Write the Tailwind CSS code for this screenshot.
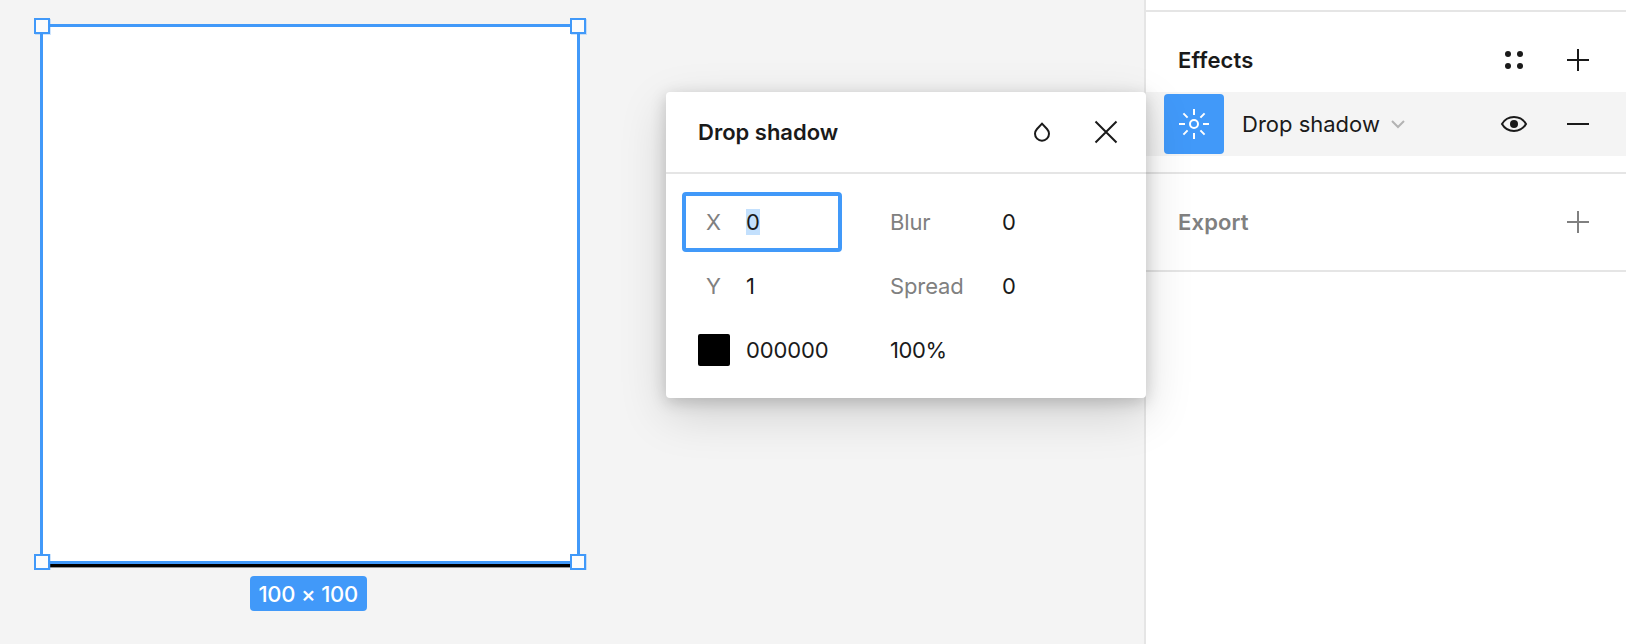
<!DOCTYPE html>
<html lang="en">
<head>
<meta charset="utf-8">
<title>Effects</title>
<script src="https://cdn.jsdelivr.net/npm/@tailwindcss/browser@4"></script>
</head>
<body class="relative flex h-[644px] w-[1626px] overflow-hidden bg-white font-['Inter',sans-serif] text-[22px] leading-8 text-[#1a1a1a]">

  <!-- Canvas -->
  <main class="relative flex-1 bg-[#f4f4f4]">
    <div class="absolute left-10 top-6 h-[540px] w-[540px] border-[3px] border-[#4199f9] bg-white shadow-[0_3.4px_0_#000]">
      <span class="absolute -left-[9px] -top-[9px] size-4 border-2 border-[#4199f9] bg-[#fcfcfc] shadow-[1px_1px_0_#4199f940]"></span>
      <span class="absolute -right-[9px] -top-[9px] size-4 border-2 border-[#4199f9] bg-[#fcfcfc] shadow-[1px_1px_0_#4199f940]"></span>
      <span class="absolute -bottom-[9px] -left-[9px] size-4 border-2 border-[#4199f9] bg-[#fcfcfc] shadow-[1px_0_0_#4199f940]"></span>
      <span class="absolute -bottom-[9px] -right-[9px] size-4 border-2 border-[#4199f9] bg-[#fcfcfc] shadow-[1px_0_0_#4199f940]"></span>
    </div>
    <div class="absolute left-[250px] top-[576px] flex h-[34.5px] w-[116.5px] items-center justify-center whitespace-nowrap rounded bg-[#4199f9] pt-px font-medium tracking-[-0.2px] text-white">100 × 100</div>
  </main>

  <!-- Properties panel -->
  <aside class="w-[482px] border-l-2 border-[#e5e5e5] bg-white pt-[10px]">
    <section class="border-y-2 border-[#e5e5e5] pb-4">
      <div class="flex h-20 items-center pl-8 pt-4 pr-8">
        <h2 class="flex-1 font-semibold tracking-[0.15px]">Effects</h2>
        <svg class="mr-8 size-8" viewBox="0 0 32 32" fill="currentColor"><circle cx="10" cy="10" r="3"/><circle cx="22" cy="10" r="3"/><circle cx="10" cy="22" r="3"/><circle cx="22" cy="22" r="3"/></svg>
        <svg class="size-8" viewBox="0 0 32 32" stroke="currentColor" stroke-width="2"><path d="M16 5v22M5 16h22"/></svg>
      </div>
      <div class="flex h-16 items-center bg-[#f4f4f4] pl-[18px] pr-8">
        <span class="flex size-[60px] items-center justify-center rounded bg-[#4199f9]">
          <svg class="size-8" viewBox="0 0 32 32" fill="none" stroke="#fff" stroke-width="2"><circle cx="16" cy="16" r="4"/><path d="M16 1v6M16 25v6M1 16h6M25 16h6M5.400 5.400l4.200 4.200M22.400 22.400l4.200 4.200M26.600 5.400l-4.200 4.200M9.600 22.400l-4.200 4.200"/></svg>
        </span>
        <span class="ml-[18px]">Drop shadow</span>
        <svg class="ml-[10.500px] h-4 w-4" viewBox="0 0 16 16" fill="none" stroke="#b3b3b3" stroke-width="2"><path d="M2 5l6 6 6-6"/></svg>
        <svg class="ml-auto mr-8 size-8" viewBox="0 0 32 32"><path d="M4 16C6.700 11.300 11 9 16 9s9.300 2.300 12 7c-2.700 4.700-7 7-12 7S6.700 20.700 4 16z" fill="none" stroke="currentColor" stroke-width="2"/><circle cx="16" cy="16" r="4" fill="currentColor"/></svg>
        <svg class="size-8" viewBox="0 0 32 32" stroke="currentColor" stroke-width="2"><path d="M5 16h22"/></svg>
      </div>
    </section>
    <section class="flex h-[98px] items-center border-b-2 border-[#e5e5e5] px-8 text-[#808080]">
      <h2 class="flex-1 font-semibold tracking-[0.15px]">Export</h2>
      <svg class="size-8" viewBox="0 0 32 32" stroke="currentColor" stroke-width="2"><path d="M16 5v22M5 16h22"/></svg>
    </section>
  </aside>

  <!-- Drop shadow settings popover -->
  <div class="absolute left-[666px] top-[92px] h-[306px] w-[480px] rounded bg-white shadow-[0_16px_48px_rgba(0,0,0,0.15),0_4px_16px_rgba(0,0,0,0.18)]">
    <header class="flex h-[82px] items-center border-b-2 border-[#e5e5e5] pl-8 pr-6">
      <h2 class="flex-1 font-semibold">Drop shadow</h2>
      <svg class="mr-8 size-8" viewBox="0 0 32 32" fill="none" stroke="currentColor" stroke-width="2"><path d="M16 7.600l5 5.400c1.300 1.500 2 3 2 4.700a7 7 0 0 1-14 0c0-1.700.7-3.200 2-4.700z"/></svg>
      <svg class="size-8" viewBox="0 0 32 32" stroke="currentColor" stroke-width="2"><path d="M5.500 5.500l21 21M26.500 5.500l-21 21"/></svg>
    </header>
    <div class="pl-4 pt-4 tracking-[-0.12px]">
      <div class="flex h-16 items-center">
        <label class="flex h-[60px] w-40 items-center rounded border-4 border-[#4199f9] pl-5"><span class="w-10 text-[#808080]">X</span><span class="bg-[#c3e0fd] leading-[26px]">0</span></label>
        <span class="ml-12 w-28 text-[#808080]">Blur</span><span>0</span>
      </div>
      <div class="flex h-16 items-center">
        <label class="flex w-40 pl-6"><span class="w-10 text-[#808080]">Y</span><span>1</span></label>
        <span class="ml-12 w-28 text-[#808080]">Spread</span><span>0</span>
      </div>
      <div class="flex h-16 items-center pl-4">
        <span class="size-8 rounded-xs bg-black"></span>
        <span class="ml-4 w-36">000000</span><span class="tracking-[-0.4px]">100%</span>
      </div>
    </div>
  </div>
</body>
</html>
